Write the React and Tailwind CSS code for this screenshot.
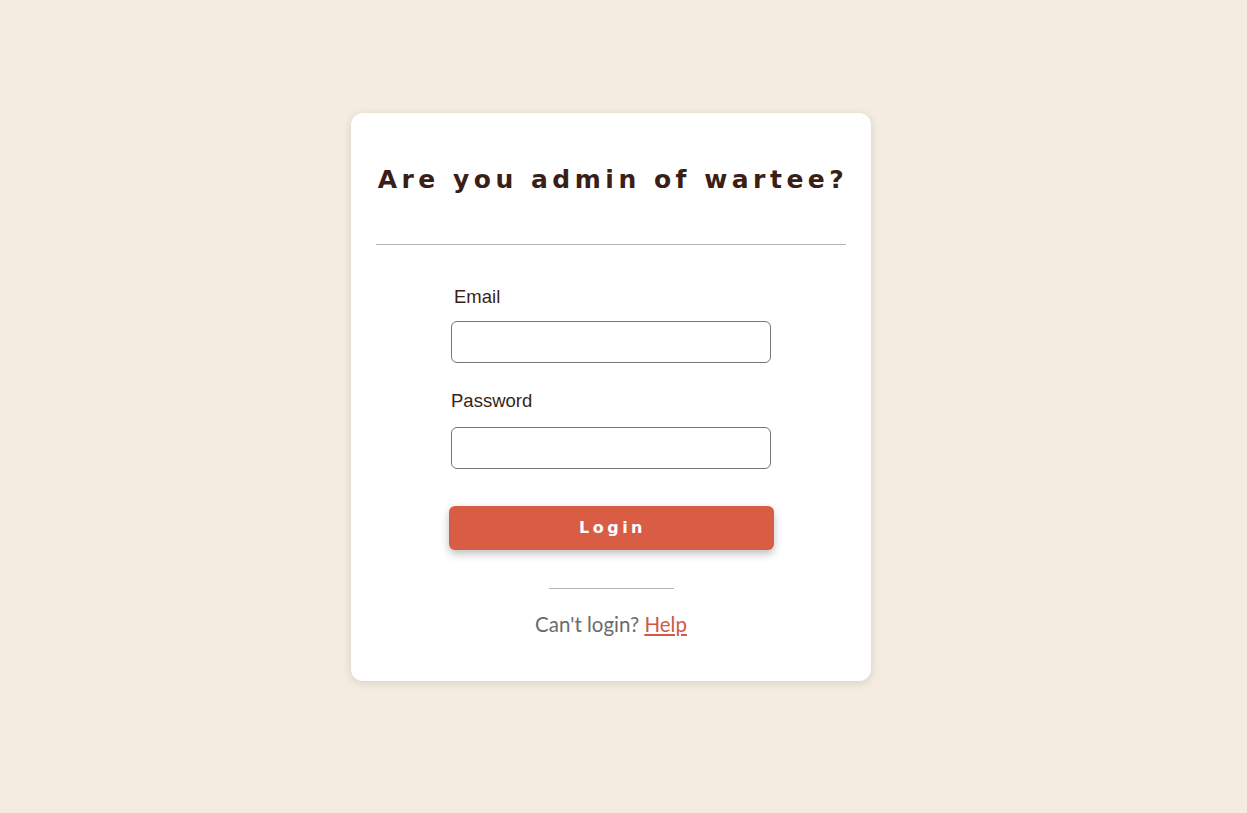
import React, { useState } from "react";

export default function App() {
  const [email, setEmail] = useState("");
  const [password, setPassword] = useState("");

  return (
    <div className="min-h-screen w-full bg-[#f4ece0] flex justify-center pt-[113px] pr-[25px]">
      <div className="w-[520px] h-[568px] bg-white rounded-[12px] shadow-[0_2px_10px_rgba(0,0,0,0.12)] px-[25px] pt-[51px]">
        <h1 className="-mx-[10px] pl-[4px] whitespace-nowrap text-center text-[#3b1e16] text-[25px] leading-[32px] font-bold tracking-[4.5px] font-['DejaVu_Sans',sans-serif]">
          Are you admin of wartee?
        </h1>
        <div className="mt-[48px] h-px bg-[#b5b5b5]" />

        {/* Formulario */}
        <form className="w-[320px] mx-auto mt-[41px] font-['Liberation_Sans',Arial,sans-serif]">
          <label className="block pl-[3px] text-[18.5px] leading-[22px] text-[#3b1e16] mb-[13px]">Email</label>
          <input
            type="email"
            value={email}
            onChange={(e) => setEmail(e.target.value)}
            className="block w-[320px] h-[42px] border border-[#767676] rounded-[6px] px-3 outline-none"
          />
          <label className="block text-[18.5px] leading-[22px] text-[#3b1e16] mt-[27px] mb-[15px]">Password</label>
          <input
            type="password"
            value={password}
            onChange={(e) => setPassword(e.target.value)}
            className="block w-[320px] h-[42px] border border-[#767676] rounded-[6px] px-3 outline-none"
          />
        </form>

        <div className="flex justify-center mt-[37px]">
          <button className="w-[325px] h-[44px] pl-[3px] bg-[#d95c45] rounded-[6px] text-white text-[16px] font-bold tracking-[3.5px] font-['DejaVu_Sans',sans-serif] shadow-[0_4px_8px_rgba(0,0,0,0.25)]">
            Login
          </button>
        </div>

        <div className="mx-auto mt-[38px] w-[125px] h-px bg-[#b5b5b5]" />
        <p className="mt-[23px] text-center text-[20.5px] leading-[24px] text-[#6b6b6b] font-['Lato',sans-serif]">
          Can't login?{" "}
          <a href="#" className="text-[#d05a45] underline">
            Help
          </a>
        </p>
      </div>
    </div>
  );
}
